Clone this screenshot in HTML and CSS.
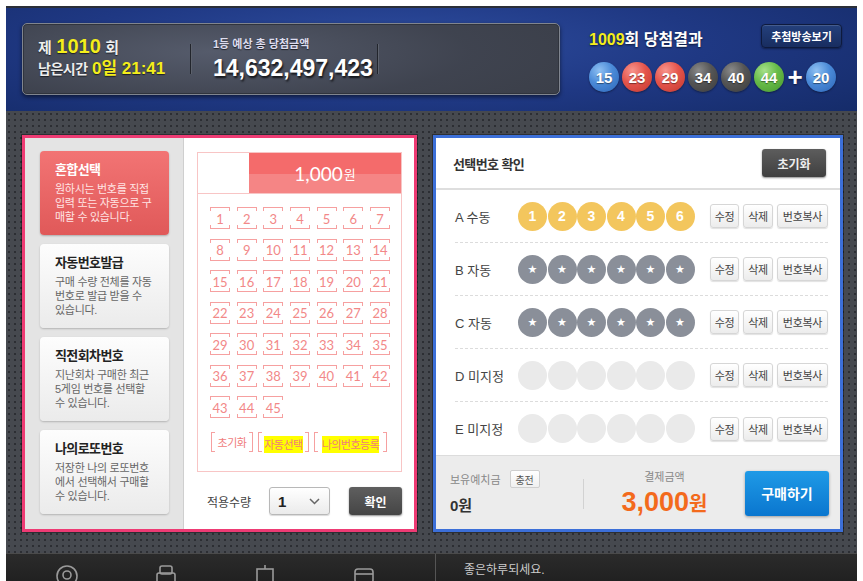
FILE: index.html
```html
<!DOCTYPE html>
<html lang="ko">
<head>
<meta charset="utf-8">
<title>로또 구매</title>
<link rel="stylesheet" href="styles.css">
</head>
<body>
<div class="app">
  <header class="top">
    <div class="jackpot-box">
      <div class="round-info">
        <div class="ri-line1"><span class="w">제</span> <span class="y big">1010</span> <span class="w">회</span></div>
        <div class="ri-line2"><span class="w">남은시간</span> <span class="y">0일 21:41</span></div>
      </div>
      <div class="vsep"></div>
      <div class="jackpot">
        <div class="jp-label">1등 예상 총 당첨금액</div>
        <div class="jp-amount">14,632,497,423</div>
      </div>
      <div class="vsep"></div>
    </div>
    <div class="result">
      <div class="result-head">
        <div class="result-title"><span class="y">1009</span>회 당첨결과</div>
        <button class="btn-broadcast">추첨방송보기</button>
      </div>
      <div class="balls">
        <span class="ball blue">15</span>
        <span class="ball red">23</span>
        <span class="ball red">29</span>
        <span class="ball gray">34</span>
        <span class="ball gray">40</span>
        <span class="ball green">44</span>
        <span class="plus">+</span>
        <span class="ball blue">20</span>
      </div>
    </div>
  </header>

  <main class="main">
    <section class="panel-left">
      <nav class="menu">
        <div class="menu-item active">
          <div class="mi-title">혼합선택</div>
          <div class="mi-desc">원하시는 번호를 직접<br>입력 또는 자동으로 구<br>매할 수 있습니다.</div>
        </div>
        <div class="menu-item">
          <div class="mi-title">자동번호발급</div>
          <div class="mi-desc">구매 수량 전체를 자동<br>번호로 발급 받을 수<br>있습니다.</div>
        </div>
        <div class="menu-item">
          <div class="mi-title">직전회차번호</div>
          <div class="mi-desc">지난회차 구매한 최근<br>5게임 번호를 선택할<br>수 있습니다.</div>
        </div>
        <div class="menu-item">
          <div class="mi-title">나의로또번호</div>
          <div class="mi-desc">저장한 나의 로또번호<br>에서 선택해서 구매할<br>수 있습니다.</div>
        </div>
      </nav>
      <div class="picker">
        <div class="slip">
          <div class="slip-head">
            <div class="slip-blank"></div>
            <div class="slip-price">1,000<span class="won">원</span></div>
          </div>
          <div class="grid">
            <span class="cell">1</span><span class="cell">2</span><span class="cell">3</span><span class="cell">4</span><span class="cell">5</span><span class="cell">6</span><span class="cell">7</span>
            <span class="cell">8</span><span class="cell">9</span><span class="cell">10</span><span class="cell">11</span><span class="cell">12</span><span class="cell">13</span><span class="cell">14</span>
            <span class="cell">15</span><span class="cell">16</span><span class="cell">17</span><span class="cell">18</span><span class="cell">19</span><span class="cell">20</span><span class="cell">21</span>
            <span class="cell">22</span><span class="cell">23</span><span class="cell">24</span><span class="cell">25</span><span class="cell">26</span><span class="cell">27</span><span class="cell">28</span>
            <span class="cell">29</span><span class="cell">30</span><span class="cell">31</span><span class="cell">32</span><span class="cell">33</span><span class="cell">34</span><span class="cell">35</span>
            <span class="cell">36</span><span class="cell">37</span><span class="cell">38</span><span class="cell">39</span><span class="cell">40</span><span class="cell">41</span><span class="cell">42</span>
            <span class="cell">43</span><span class="cell">44</span><span class="cell">45</span>
          </div>
          <div class="slip-actions">
            <span class="sbtn s1">초기화</span>
            <span class="sbtn s2"><mark>자동선택</mark></span>
            <span class="sbtn s3"><mark>나의번호등록</mark></span>
          </div>
        </div>
        <div class="qty">
          <span class="qty-label">적용수량</span>
          <div class="select"><span class="sel-val">1</span><svg class="chev" width="11" height="7" viewBox="0 0 11 7"><polyline points="1,1 5.5,5.5 10,1" fill="none" stroke="#666" stroke-width="1.5"/></svg></div>
          <button class="btn-ok">확인</button>
        </div>
      </div>
    </section>

    <section class="panel-right">
      <div class="pr-head">
        <div class="pr-title">선택번호 확인</div>
        <button class="btn-reset">초기화</button>
      </div>
      <div class="rows">
        <div class="row">
          <span class="row-label">A 수동</span>
          <div class="row-balls">
            <span class="pick yellow">1</span><span class="pick yellow">2</span><span class="pick yellow">3</span><span class="pick yellow">4</span><span class="pick yellow">5</span><span class="pick yellow">6</span>
          </div>
          <div class="row-btns"><button class="rbtn b1">수정</button><button class="rbtn b2">삭제</button><button class="rbtn b3">번호복사</button></div>
        </div>
        <div class="row">
          <span class="row-label">B 자동</span>
          <div class="row-balls">
            <span class="pick auto">★</span><span class="pick auto">★</span><span class="pick auto">★</span><span class="pick auto">★</span><span class="pick auto">★</span><span class="pick auto">★</span>
          </div>
          <div class="row-btns"><button class="rbtn b1">수정</button><button class="rbtn b2">삭제</button><button class="rbtn b3">번호복사</button></div>
        </div>
        <div class="row">
          <span class="row-label">C 자동</span>
          <div class="row-balls">
            <span class="pick auto">★</span><span class="pick auto">★</span><span class="pick auto">★</span><span class="pick auto">★</span><span class="pick auto">★</span><span class="pick auto">★</span>
          </div>
          <div class="row-btns"><button class="rbtn b1">수정</button><button class="rbtn b2">삭제</button><button class="rbtn b3">번호복사</button></div>
        </div>
        <div class="row">
          <span class="row-label">D 미지정</span>
          <div class="row-balls">
            <span class="pick empty"></span><span class="pick empty"></span><span class="pick empty"></span><span class="pick empty"></span><span class="pick empty"></span><span class="pick empty"></span>
          </div>
          <div class="row-btns"><button class="rbtn b1">수정</button><button class="rbtn b2">삭제</button><button class="rbtn b3">번호복사</button></div>
        </div>
        <div class="row last">
          <span class="row-label">E 미지정</span>
          <div class="row-balls">
            <span class="pick empty"></span><span class="pick empty"></span><span class="pick empty"></span><span class="pick empty"></span><span class="pick empty"></span><span class="pick empty"></span>
          </div>
          <div class="row-btns"><button class="rbtn b1">수정</button><button class="rbtn b2">삭제</button><button class="rbtn b3">번호복사</button></div>
        </div>
      </div>
      <div class="pr-foot">
        <div class="wallet">
          <div class="wallet-top"><span class="muted">보유예치금</span><button class="btn-charge">충전</button></div>
          <div class="wallet-amt">0원</div>
        </div>
        <div class="fdiv"></div>
        <div class="pay">
          <div class="muted">결제금액</div>
          <div class="pay-amt">3,000<span class="pay-won">원</span></div>
        </div>
        <button class="btn-buy">구매하기</button>
      </div>
    </section>
  </main>

  <footer class="bottom">
    <div class="bottom-icons">
      <svg class="bi" width="24" height="24" viewBox="0 0 24 24"><circle cx="12" cy="12" r="10" fill="none" stroke="#9a9a9a" stroke-width="1.6"/><circle cx="12" cy="11" r="4" fill="none" stroke="#9a9a9a" stroke-width="1.6"/></svg>
      <svg class="bi" width="24" height="24" viewBox="0 0 24 24"><rect x="6" y="2" width="12" height="8" rx="2" fill="none" stroke="#9a9a9a" stroke-width="1.6"/><rect x="3" y="9" width="18" height="12" rx="2" fill="none" stroke="#9a9a9a" stroke-width="1.6"/></svg>
      <svg class="bi" width="24" height="24" viewBox="0 0 24 24"><line x1="12" y1="1" x2="12" y2="5" stroke="#9a9a9a" stroke-width="1.6"/><rect x="4" y="5" width="16" height="16" fill="none" stroke="#9a9a9a" stroke-width="1.6"/></svg>
      <svg class="bi" width="24" height="24" viewBox="0 0 24 24"><rect x="3" y="5" width="18" height="14" rx="3" fill="none" stroke="#9a9a9a" stroke-width="1.6"/><line x1="3" y1="10" x2="21" y2="10" stroke="#9a9a9a" stroke-width="1.6"/></svg>
    </div>
    <div class="bottom-msg">좋은하루되세요.</div>
  </footer>
</div>
</body>
</html>
```

FILE: styles.css
```css
* { box-sizing: border-box; margin: 0; padding: 0; }
html, body { height: 581px; overflow: hidden; }
body {
  background: #fff;
  font-family: "Liberation Sans", "Noto Sans CJK KR", sans-serif;
  color: #333;
}
button { font-family: inherit; cursor: pointer; }

.app { margin: 6px 0 0 6px; width: 851px; }

/* ---------- header ---------- */
.top {
  height: 105px;
  border-top: 2px solid #2b2f38;
  background: radial-gradient(ellipse 75% 110% at 45% 35%, #2e4d9f 0%, #1f3883 50%, #142a66 100%);
  display: flex;
  align-items: flex-start;
  padding: 15px 15px 0 16px;
}
.jackpot-box {
  width: 538px;
  height: 72px;
  border-radius: 5px;
  border: 1px solid #80858f;
  background: radial-gradient(ellipse 80% 120% at 35% 40%, #555b6b 0%, rgba(67,72,86,.35) 60%, #3a3e48 100%), #3d414c;
  box-shadow: 0 2px 4px rgba(0,0,0,.55), inset 0 0 0 1px #30343d;
  display: flex;
  align-items: center;
  padding-left: 15px;
}
.round-info { width: 152px; margin-top: -3px; }
.ri-line1, .ri-line2 { line-height: 21px; white-space: nowrap; text-shadow: 0 1px 1px rgba(0,0,0,.6); }
.ri-line1 .w { font-size: 15px; font-weight: bold; color: #eee; }
.ri-line1 .big { font-size: 20px; }
.ri-line2 .w { font-size: 14px; font-weight: bold; color: #eee; letter-spacing: -0.5px; }
.ri-line2 .y { font-size: 17px; }
.y { color: #f4ee1c; font-weight: bold; }
.vsep { width: 2px; height: 30px; border-left: 1px solid #22252c; border-right: 1px solid #5d626d; }
.jackpot { width: 185px; padding-left: 21px; }
.jp-label { font-size: 11px; font-weight: bold; color: #dde; line-height: 14px; white-space: nowrap; text-shadow: 0 1px 1px rgba(0,0,0,.6); }
.jp-amount {
  font-size: 23px; font-weight: bold; color: #fff; line-height: 28px; margin-top: 3px;
  white-space: nowrap; text-shadow: 1px 2px 2px rgba(0,0,0,.75);
}

.result { margin-left: 29px; width: 253px; margin-top: 1px; }
.result-head { display: flex; justify-content: space-between; align-items: center; height: 24px; }
.result-title { font-size: 16px; font-weight: bold; color: #fff; margin-top: 4px; white-space: nowrap; text-shadow: 0 1px 2px rgba(0,0,0,.6); }
.btn-broadcast {
  width: 81px; height: 24px; border-radius: 4px;
  border: 1px solid #0e1a3d;
  background: linear-gradient(#24407c, #182d60);
  box-shadow: inset 0 1px 0 rgba(255,255,255,.15), 0 1px 2px rgba(0,0,0,.4);
  color: #fff; font-size: 11px; font-weight: bold;
}
.balls { display: flex; align-items: center; gap: 3px; margin-top: 14px; }
.ball {
  width: 30px; height: 30px; border-radius: 50%;
  display: flex; align-items: center; justify-content: center;
  color: #fff; font-size: 15px; font-weight: bold;
  text-shadow: 0 1px 1px rgba(0,0,0,.45);
  box-shadow: 0 1px 2px rgba(0,0,0,.4);
}
.ball.blue  { background: radial-gradient(circle at 35% 28%, #8fc0f2 0%, #4a8ad8 45%, #2e66b8 100%); }
.ball.red   { background: radial-gradient(circle at 35% 28%, #f7948c 0%, #e4544b 45%, #c2382f 100%); }
.ball.gray  { background: radial-gradient(circle at 35% 28%, #8a8a8a 0%, #555 45%, #3c3c3c 100%); }
.ball.green { background: radial-gradient(circle at 35% 28%, #a6e08a 0%, #66bb48 45%, #47972e 100%); }
.plus { width: 16px; text-align: center; color: #fff; font-size: 26px; font-weight: bold; line-height: 30px; text-shadow: 0 1px 2px rgba(0,0,0,.5); }

/* ---------- main ---------- */
.main {
  height: 442px;
  background:
    radial-gradient(circle, #2c2e33 0.9px, transparent 1.4px) 0 0 / 6px 6px,
    #46494f;
  display: flex;
  gap: 16px;
  padding: 24px 14px 0 16px;
}

.panel-left {
  width: 395px; height: 397px;
  border: 3px solid #ee3b74;
  background: #fff;
  display: flex;
  box-shadow: 0 0 0 1px rgba(0,0,0,.35);
}
.menu {
  width: 159px;
  background: #e4e4e4;
  border-right: 1px solid #cfcfcf;
  padding: 13px 0 0 15px;
  display: flex; flex-direction: column; gap: 9px;
}
.menu-item {
  width: 129px; height: 84px;
  border-radius: 4px;
  background: linear-gradient(#fdfdfd, #ebebeb);
  box-shadow: 0 1px 2px rgba(0,0,0,.22);
  padding: 10px 0 0 15px;
}
.mi-title { font-size: 13px; font-weight: bold; line-height: 18px; color: #222; letter-spacing: -0.6px; margin-bottom: 3px; }
.mi-desc { font-size: 11px; line-height: 14px; color: #666; letter-spacing: -0.3px; white-space: nowrap; }
.menu-item.active { background: linear-gradient(#f27474, #e05959); box-shadow: 0 1px 2px rgba(0,0,0,.25); }
.menu-item.active .mi-title { color: #fff; }
.menu-item.active .mi-desc { color: #ffe4e4; }

.picker { flex: 1; padding: 14px 0 0 13px; }
.slip { width: 205px; height: 320px; border: 1px solid #f8c5c5; }
.slip-head { height: 41px; display: flex; border-bottom: 1px solid #f8c5c5; }
.slip-blank { width: 51px; }
.slip-price {
  flex: 1;
  background: linear-gradient(#f46b6b 0%, #f46b6b 52%, #f58585 52%, #f58585 100%);
  color: #fff;
  font-family: "Lato", "Noto Sans CJK KR", sans-serif;
  font-size: 19px;
  display: flex; align-items: center; justify-content: center;
}
.slip-price .won { font-size: 13px; margin-left: 1px; }

.grid {
  display: grid;
  grid-template-columns: repeat(7, 20px);
  grid-auto-rows: 22px;
  column-gap: 6.67px;
  row-gap: 9.5px;
  padding: 13px 0 0 12px;
}
.cell {
  display: flex; align-items: center; justify-content: center;
  font-family: "Lato", sans-serif; font-size: 13px; color: #f28888;
  background:
    linear-gradient(#f6a0a0, #f6a0a0) left top / 100% 1px no-repeat,
    linear-gradient(#f6a0a0, #f6a0a0) left bottom / 100% 1px no-repeat,
    linear-gradient(#f6a0a0, #f6a0a0) left top / 1px 4px no-repeat,
    linear-gradient(#f6a0a0, #f6a0a0) right top / 1px 4px no-repeat,
    linear-gradient(#f6a0a0, #f6a0a0) left bottom / 1px 4px no-repeat,
    linear-gradient(#f6a0a0, #f6a0a0) right bottom / 1px 4px no-repeat;
  padding-top: 1px;
}

.slip-actions { display: flex; gap: 5px; padding: 14px 0 0 13px; }
.sbtn {
  height: 20px;
  display: flex; align-items: center; justify-content: center;
  font-size: 11px; color: #f07c7c; letter-spacing: -0.5px;
  background:
    linear-gradient(#f6a0a0, #f6a0a0) left top / 1px 100% no-repeat,
    linear-gradient(#f6a0a0, #f6a0a0) right top / 1px 100% no-repeat,
    linear-gradient(#f6a0a0, #f6a0a0) left top / 4px 1px no-repeat,
    linear-gradient(#f6a0a0, #f6a0a0) right top / 4px 1px no-repeat,
    linear-gradient(#f6a0a0, #f6a0a0) left bottom / 4px 1px no-repeat,
    linear-gradient(#f6a0a0, #f6a0a0) right bottom / 4px 1px no-repeat;
}
.s1 { width: 42px; }
.s2 { width: 51px; }
.s3 { width: 73px; }
.sbtn mark { background: #ffff00; color: #f07c7c; padding: 3px 0 1px; margin-top: 4px; line-height: 13px; }

.qty { display: flex; align-items: center; margin-top: 15px; padding-left: 10px; }
.qty-label { font-size: 12px; color: #444; width: 62px; }
.select {
  width: 61px; height: 28px;
  border: 1px solid #b8b8b8; border-radius: 3px;
  background: linear-gradient(#fff, #ebebeb);
  box-shadow: 0 1px 1px rgba(0,0,0,.15);
  display: flex; align-items: center; justify-content: space-between;
  padding: 0 9px 0 8px;
}
.sel-val { font-size: 15px; font-weight: bold; color: #222; }
.btn-ok {
  width: 53px; height: 28px; margin-left: 19px;
  border: none; border-radius: 3px;
  background: linear-gradient(#5f5f5f, #454545);
  box-shadow: 0 1px 2px rgba(0,0,0,.45);
  color: #fff; font-size: 12px; font-weight: bold;
}

/* ---------- right panel ---------- */
.panel-right {
  width: 410px; height: 397px;
  border: 3px solid #3c6fd8;
  background: #fff;
  display: flex; flex-direction: column;
  box-shadow: 0 0 0 1px rgba(0,0,0,.35);
}
.pr-head {
  height: 52px; flex: none;
  border-bottom: 2px solid #dedede;
  display: flex; align-items: center; justify-content: space-between;
  padding: 0 14px 0 17px;
}
.pr-title { font-size: 13px; font-weight: bold; color: #333; letter-spacing: -0.6px; }
.btn-reset {
  width: 64px; height: 28px; border: none; border-radius: 3px;
  background: linear-gradient(#5d5d5d, #3f3f3f);
  box-shadow: 0 1px 2px rgba(0,0,0,.45);
  color: #eee; font-size: 12px; font-weight: bold;
}
.rows { flex: none; }
.row {
  height: 53px;
  margin: 0 12px 0 19px;
  border-bottom: 1px dashed #dcdcdc;
  display: flex; align-items: center;
}
.row.last { border-bottom: none; }
.row-label { width: 63px; font-size: 13px; color: #444; white-space: nowrap; }
.row-balls { display: flex; gap: 0.5px; }
.pick {
  width: 29px; height: 29px; border-radius: 50%;
  display: flex; align-items: center; justify-content: center;
  color: #fff; font-size: 14px; font-weight: bold;
}
.pick.yellow { background: #f3c65d; }
.pick.auto { background: #8a8f99; font-family: "DejaVu Sans", sans-serif; font-size: 11px; }
.pick.empty { background: #eaeaea; }
.row-btns { margin-left: auto; display: flex; gap: 4px; }
.rbtn {
  height: 24px;
  border: 1px solid #d6d6d6; border-radius: 3px;
  background: linear-gradient(#fff, #ececec);
  box-shadow: 0 1px 1px rgba(0,0,0,.12);
  font-size: 11px; color: #444; letter-spacing: -0.3px;
}
.b1 { width: 29px; }
.b2 { width: 30px; }
.b3 { width: 51px; }

.pr-foot {
  flex: 1;
  background: #ececec;
  border-top: 1px solid #dcdcdc;
  display: flex; align-items: center;
  padding: 0 11px 0 14px;
}
.wallet { width: 133px; }
.wallet-top { display: flex; align-items: center; gap: 9px; height: 18px; }
.muted { font-size: 11px; color: #888; white-space: nowrap; }
.btn-charge {
  width: 30px; height: 18px;
  border: 1px solid #cfcfcf; border-radius: 2px;
  background: linear-gradient(#fff, #f0f0f0);
  font-size: 10px; color: #555;
}
.wallet-amt { font-size: 15px; font-weight: bold; color: #333; margin-top: 9px; line-height: 18px; }
.fdiv { width: 1px; height: 30px; background: #d2d2d2; margin-top: 3px; }
.pay { flex: 1; text-align: center; padding-top: 2px; }
.pay-amt { font-size: 27px; font-weight: bold; color: #f36a1c; line-height: 30px; margin-top: 3px; }
.pay-won { font-size: 20px; }
.btn-buy {
  width: 84px; height: 45px; margin-top: 1px;
  border: none; border-radius: 3px;
  background: linear-gradient(#1f9ae6, #0a76cf);
  box-shadow: 0 1px 3px rgba(0,0,0,.35);
  color: #fff; font-size: 14px; font-weight: bold;
}

/* ---------- bottom bar ---------- */
.bottom {
  height: 40px;
  border-top: 1px solid #4b4b4b;
  background: linear-gradient(#2b2b2b, #1c1c1c);
  display: flex;
}
.bottom-icons {
  width: 430px;
  border-right: 1px solid #555;
  display: flex;
  padding: 10px 0 0 49px;
  gap: 75px;
}
.bi { flex: none; }
.bottom-msg { font-size: 12px; color: #ccc; padding: 6px 0 0 28px; }
```
